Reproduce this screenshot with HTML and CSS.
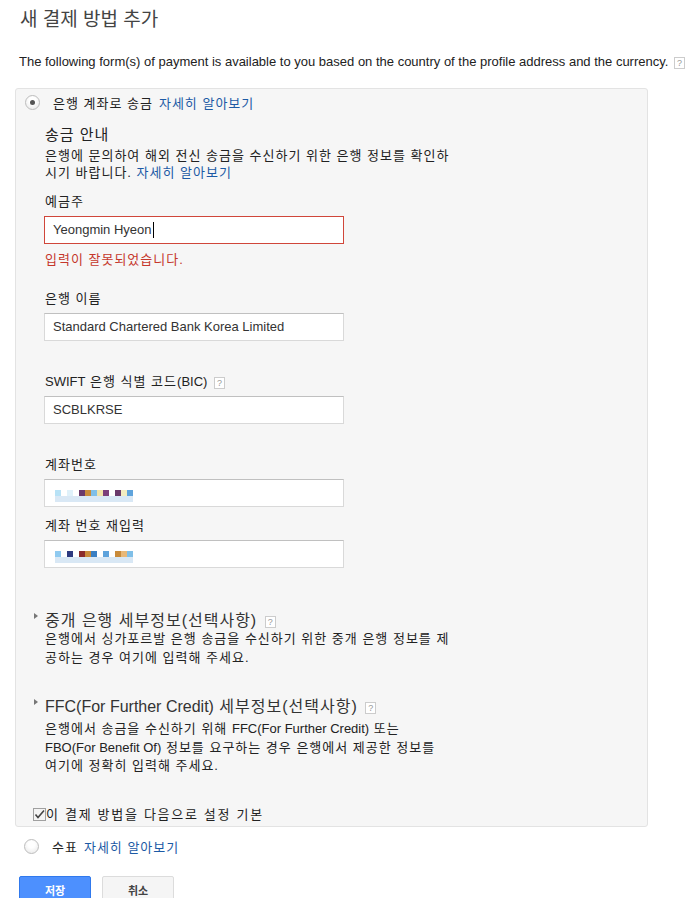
FILE: index.html
```html
<!DOCTYPE html>
<html lang="ko">
<head>
    <meta charset="UTF-8">
    <meta name="viewport" content="width=device-width, initial-scale=1.0">
    <title>새 결제 방법 추가</title>
    <link rel="stylesheet" href="styles.css">
</head>
<body>
    <div class="page">
        <h1>새 결제 방법 추가</h1>
        <p class="intro">The following form(s) of payment is available to you based on the country of the profile address and the currency. <span class="help">?</span></p>

        <div class="method-box">
            <div class="option">
                <span class="radio checked"></span>
                <span class="option-name">은행 계좌로 송금</span>
                <a href="#" class="link">자세히 알아보기</a>
            </div>

            <div class="details">
                <h2>송금 안내</h2>
                <p class="desc">은행에 문의하여 해외 전신 송금을 수신하기 위한 은행 정보를 확인하<br>시기 바랍니다. <a href="#" class="link">자세히 알아보기</a></p>

                <div class="field first">
                    <label>예금주</label>
                    <div class="input-field error">Yeongmin Hyeon<span class="caret"></span></div>
                    <div class="error-msg">입력이 잘못되었습니다.</div>
                </div>

                <div class="field after-error">
                    <label>은행 이름</label>
                    <div class="input-field">Standard Chartered Bank Korea Limited</div>
                </div>

                <div class="field">
                    <label><span class="en">SWIFT</span> 은행 식별 코드<span class="en">(BIC)</span> <span class="help">?</span></label>
                    <div class="input-field">SCBLKRSE</div>
                </div>

                <div class="field">
                    <label>계좌번호</label>
                    <div class="input-field">
                        <span class="mosaic">
                            <i style="background:#b8e2f6"></i><i style="background:#fff"></i><i style="background:#dff1fa"></i><i style="background:#fff"></i><i style="background:#6b3a6b"></i><i style="background:#c98b3a"></i><i style="background:#7fbfe8"></i><i style="background:#f1e3a8"></i><i style="background:#7b3f7a"></i><i style="background:#fff"></i><i style="background:#6b3a6b"></i><i style="background:#f3ecc0"></i><i style="background:#5ea3dc"></i>
                        </span>
                    </div>
                </div>

                <div class="field tight">
                    <label>계좌 번호 재입력</label>
                    <div class="input-field">
                        <span class="mosaic">
                            <i style="background:#8fcaf0"></i><i style="background:#fff"></i><i style="background:#2d3a80"></i><i style="background:#fff"></i><i style="background:#8a2c2c"></i><i style="background:#c98b3a"></i><i style="background:#3a7fc2"></i><i style="background:#fff"></i><i style="background:#5ea3dc"></i><i style="background:#fff"></i><i style="background:#c98b3a"></i><i style="background:#e8b878"></i><i style="background:#7fbfe8"></i>
                        </span>
                    </div>
                </div>

                <div class="extra">
                    <h3><span class="arrow"></span>중개 은행 세부정보(선택사항) <span class="help">?</span></h3>
                    <p class="desc">은행에서 싱가포르발 은행 송금을 수신하기 위한 중개 은행 정보를 제<br>공하는 경우 여기에 입력해 주세요.</p>
                </div>

                <div class="extra ffc">
                    <h3><span class="arrow"></span><span class="en">FFC(For Further Credit)</span> 세부정보(선택사항) <span class="help">?</span></h3>
                    <p class="desc">은행에서 송금을 수신하기 위해 <span class="en">FFC(For Further Credit)</span> 또는<br><span class="en">FBO(For Benefit Of)</span> 정보를 요구하는 경우 은행에서 제공한 정보를<br>여기에 정확히 입력해 주세요.</p>
                </div>

                <div class="default-check">
                    <svg class="checkbox" width="13" height="13" viewBox="0 0 13 13">
                        <rect x="0.5" y="0.5" width="12" height="12" fill="#f4f4f4" stroke="#a0a0a0"/>
                        <path d="M2.5 6.5 L5 9.5 L11 2.5" fill="none" stroke="#444" stroke-width="1.6"/>
                    </svg>
                    <span>이 결제 방법을 다음으로 설정 기본</span>
                </div>
            </div>
        </div>

        <div class="option cheque">
            <span class="radio"></span>
            <span class="option-name">수표</span>
            <a href="#" class="link">자세히 알아보기</a>
        </div>

        <div class="actions">
            <button class="btn-save">저장</button>
            <button class="btn-cancel">취소</button>
        </div>
    </div>
</body>
</html>
```

FILE: styles.css
```css
body {
    margin: 0;
    font-family: "Liberation Sans", Arial, "Noto Sans CJK KR", sans-serif;
    font-size: 13px;
    letter-spacing: 1px;
    color: #222;
    background: #fff;
}

.en {
    letter-spacing: 0;
}

.page {
    padding: 8px 0 0 15px;
}

h1 {
    margin: 0 0 0 5px;
    font-size: 19px;
    font-weight: normal;
    line-height: 24px;
    letter-spacing: 0;
    color: #444;
}

.intro {
    margin: 21px 0 0 4px;
    line-height: 17px;
    letter-spacing: 0;
}

.help {
    display: inline-block;
    width: 9px;
    height: 10px;
    border: 1px solid #ccc;
    background: #fff;
    color: #999;
    font-size: 9px;
    line-height: 10px;
    letter-spacing: 0;
    text-align: center;
    vertical-align: middle;
    margin-left: 2px;
}

.link {
    color: #1c5aa5;
    text-decoration: none;
}

.method-box {
    width: 631px;
    margin-top: 18px;
    padding-bottom: 2px;
    background: #f6f6f6;
    border: 1px solid #e3e3e3;
    border-radius: 3px;
}

.option {
    display: flex;
    align-items: center;
    height: 26px;
    padding-left: 9px;
}

.option.cheque {
    margin-top: 7px;
}

.radio {
    display: flex;
    align-items: center;
    justify-content: center;
    width: 13px;
    height: 13px;
    border: 1px solid #bdbdbd;
    border-radius: 50%;
    background: radial-gradient(circle at 50% 35%, #fff 30%, #e6e6e6 100%);
    margin-right: 13px;
}

.radio.checked::after {
    content: "";
    width: 5px;
    height: 5px;
    border-radius: 50%;
    background: #555;
}

.option-name {
    margin-right: 6px;
}

.details {
    padding-left: 29px;
}

h2 {
    margin: 10px 0 0;
    font-size: 15px;
    font-weight: normal;
    line-height: 20px;
}

.desc {
    margin: 2px 0 0;
    line-height: 17px;
}

.field {
    margin-top: 32px;
}

.field.first {
    margin-top: 12px;
}

.field.after-error {
    margin-top: 22px;
}

.field.tight {
    margin-top: 10px;
}

.field label {
    display: block;
    line-height: 18px;
    margin-bottom: 5px;
}

.input-field {
    width: 300px;
    height: 28px;
    box-sizing: border-box;
    margin-left: -1px;
    padding-left: 8px;
    border: 1px solid #d9d9d9;
    border-top-color: #c0c0c0;
    background: #fff;
    color: #333;
    line-height: 26px;
    letter-spacing: 0;
    display: flex;
    align-items: center;
}

.input-field.error {
    border-color: #d0463a;
}

.caret {
    display: inline-block;
    width: 1px;
    height: 16px;
    background: #000;
    margin-left: 1px;
}

.error-msg {
    margin-top: 7px;
    line-height: 17px;
    color: #c5372c;
}

.mosaic {
    display: flex;
    margin-left: 2px;
}

.mosaic i {
    width: 6px;
    height: 6px;
    box-shadow: 0 6px 0 rgba(180, 210, 235, 0.5);
}

.extra {
    margin-top: 43px;
}

.extra h3 {
    margin: 0;
    font-size: 16px;
    font-weight: normal;
    line-height: 20px;
    color: #333;
}

.extra .desc {
    margin: -2px 0 0;
    line-height: 19px;
}

.extra.ffc {
    margin-top: 30px;
}

.extra.ffc h3 {
    margin-bottom: 3px;
}

.extra.ffc .desc {
    margin-top: 0;
    line-height: 18.5px;
}

.arrow {
    display: inline-block;
    width: 0;
    height: 0;
    border-left: 4px solid #777;
    border-top: 3.5px solid transparent;
    border-bottom: 3.5px solid transparent;
    margin: 2px 7px 0 -11px;
    vertical-align: top;
}

.default-check {
    display: flex;
    align-items: center;
    margin-top: 30px;
    line-height: 18px;
    letter-spacing: 1.7px;
}

.checkbox {
    margin-left: -12px;
}

.actions {
    display: flex;
    gap: 11px;
    margin-top: 16px;
    padding-left: 4px;
}

.actions button {
    width: 72px;
    height: 29px;
    border-radius: 2px;
    font-family: "Liberation Sans", Arial, "Noto Sans CJK KR", sans-serif;
    font-size: 11px;
    font-weight: bold;
    cursor: pointer;
}

.btn-save {
    background: #4d90fe;
    border: 1px solid #3079ed;
    color: #fff;
}

.btn-cancel {
    background: #f5f5f5;
    border: 1px solid #dcdcdc;
    color: #444;
}
```
